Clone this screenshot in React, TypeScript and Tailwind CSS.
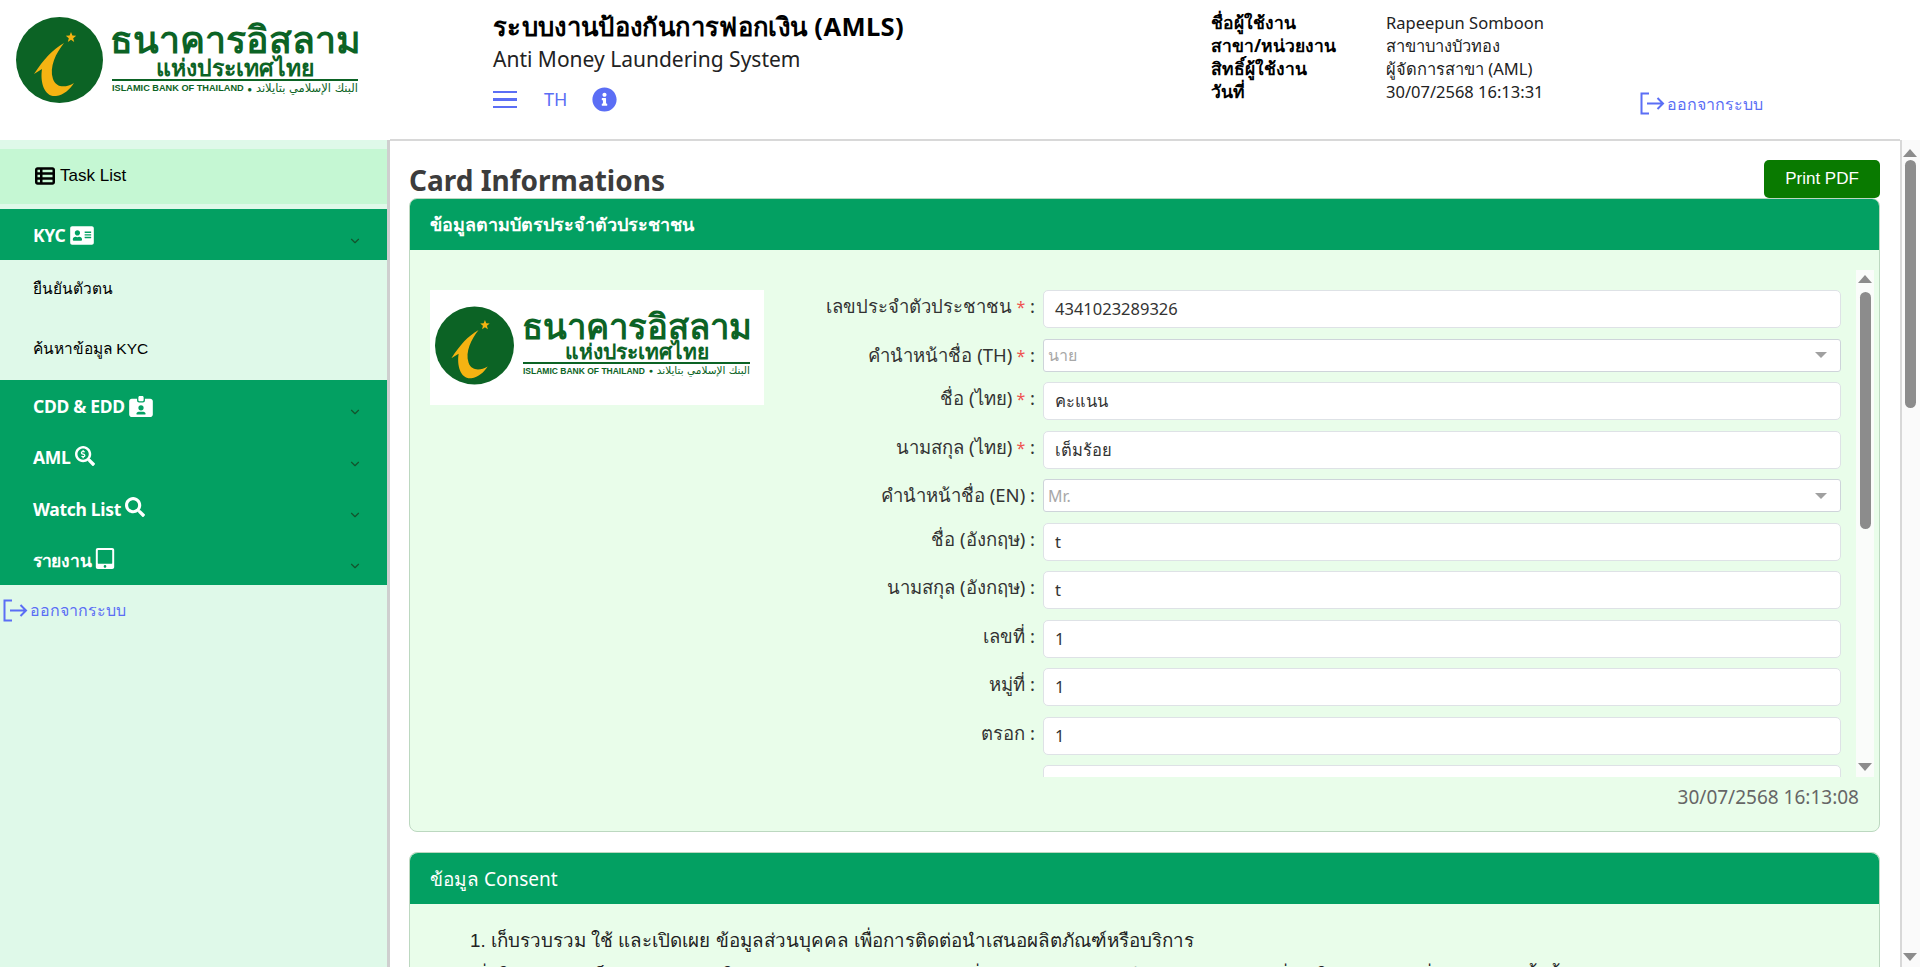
import { ChevronDown } from "lucide-react";
import { FaAddressCard, FaInfoCircle, FaSearch, FaSearchDollar, FaTabletAlt } from "react-icons/fa";
import { FaIdCardClip, FaTableList } from "react-icons/fa6";

function LogoMark({ className }: { className: string }) {
  return (
    <svg viewBox="0 0 87 86" className={className}>
      <ellipse cx="43.5" cy="43" rx="43.5" ry="43" fill="#0c6325" />
      <path
        d="M48 26C36 33 28 42 18 57L26 52C24 65 28 80 40 79C48 78 54 72 58 66C50 71 40 71 37 62C33 50 40 36 48 26Z"
        fill="#f5b312"
      />
      <path d="M55 15L56.4 18.6L60.2 18.8L57.2 21.2L58.2 25L55 22.8L51.8 25L52.8 21.2L49.8 18.8L53.6 18.6Z" fill="#f5b312" />
    </svg>
  );
}

function HeaderLogo() {
  return (
    <div className="flex items-start gap-[9px] text-[#0c6325]">
      <LogoMark className="w-[87px] h-[86px] shrink-0" />
      <div className="w-[246px] flex flex-col items-center pt-[2px]">
        <span className="text-[37.5px] leading-[40px] font-bold whitespace-nowrap">ธนาคารอิสลาม</span>
        <span className="text-[23px] leading-[16px] font-bold whitespace-nowrap">แห่งประเทศไทย</span>
        <div className="w-full h-[1.5px] bg-[#0c6325] mt-[4px]" />
        <div className="w-full flex justify-between items-center h-[16px]">
          <span className="text-[9.2px] font-bold font-['Liberation_Sans',sans-serif] whitespace-nowrap">ISLAMIC BANK OF THAILAND</span>
          <span className="text-[8px]">●</span>
          <span className="text-[11.5px] font-['DejaVu_Sans',sans-serif] whitespace-nowrap">البنك الإسلامي بتايلاند</span>
        </div>
      </div>
    </div>
  );
}

function CardLogo() {
  return (
    <div className="w-[334px] h-[115px] bg-white flex items-start gap-[9px] pl-[5px] pt-[16px] text-[#0c6325]">
      <LogoMark className="w-[79px] h-[79px] shrink-0" />
      <div className="w-[227px] flex flex-col items-center pt-[2px]">
        <span className="text-[34.7px] leading-[36px] font-bold whitespace-nowrap">ธนาคารอิสลาม</span>
        <span className="text-[21px] leading-[15px] font-bold whitespace-nowrap">แห่งประเทศไทย</span>
        <div className="w-full h-[1.5px] bg-[#0c6325] mt-[3px]" />
        <div className="w-full flex justify-between items-center h-[15px]">
          <span className="text-[8.5px] font-bold font-['Liberation_Sans',sans-serif] whitespace-nowrap">ISLAMIC BANK OF THAILAND</span>
          <span className="text-[7px]">●</span>
          <span className="text-[10.5px] font-['DejaVu_Sans',sans-serif] whitespace-nowrap">البنك الإسلامي بتايلاند</span>
        </div>
      </div>
    </div>
  );
}

function LogoutLink({ className }: { className?: string }) {
  return (
    <a className={`flex items-center gap-[2px] text-[#5b6ef5] text-[16px] leading-[22px] ${className ?? ""}`}>
      <svg viewBox="0 0 25 23" className="w-[25px] h-[23px]" fill="none" stroke="currentColor" strokeWidth="2">
        <path d="M9 1.5H1.5V21.5H9" />
        <path d="M7 11.5H23M17.5 6L23 11.5L17.5 17" />
      </svg>
      <span>ออกจากระบบ</span>
    </a>
  );
}

function MenuBand({ label, icon }: { label: string; icon: React.ReactNode }) {
  return (
    <div className="h-[51.25px] flex justify-between pl-[33px] pr-[25px] text-white">
      <div className="flex items-center gap-[4px] h-[52px] font-bold text-[17.5px] tracking-[-0.3px]">
        <span>{label}</span>
        {icon}
      </div>
      <ChevronDown className="w-[14px] h-[14px] mt-[25px] text-[#14532d]" strokeWidth={2} />
    </div>
  );
}

function Sidebar() {
  return (
    <aside className="w-[390px] shrink-0 h-full bg-[#dff9e9] border-r-[3px] border-[#cfcfcf] pt-[9px] font-['Liberation_Sans',sans-serif]">
      <div className="h-[55px] bg-[#c5f7d3] flex items-center pl-[35px] pb-[1px] gap-[5px] text-[17px] text-black">
        <FaTableList className="w-[20px] h-[20px]" />
        <span>Task List</span>
      </div>
      <div className="mt-[5px] bg-[#03a062] font-['Noto_Sans',sans-serif]">
        <MenuBand label="KYC" icon={<FaAddressCard className="w-[24px] h-[21px]" />} />
      </div>
      <div className="h-[120px] flex flex-col text-[15.5px] text-black pl-[33px]">
        <div className="h-[56px] flex items-center pt-[1px]">ยืนยันตัวตน</div>
        <div className="h-[64px] flex items-center">ค้นหาข้อมูล KYC</div>
      </div>
      <div className="bg-[#03a062] font-['Noto_Sans',sans-serif]">
        <MenuBand label="CDD & EDD" icon={<FaIdCardClip className="w-[24px] h-[21px]" />} />
        <MenuBand label="AML" icon={<FaSearchDollar className="w-[20px] h-[20px] -mt-[3px]" />} />
        <MenuBand label="Watch List" icon={<FaSearch className="w-[20px] h-[20px] -mt-[3px]" />} />
        <MenuBand label="รายงาน" icon={<FaTabletAlt className="w-[20px] h-[21px] -mt-[3px]" />} />
      </div>
      <LogoutLink className="mt-[14px] pl-[3px]" />
    </aside>
  );
}

type Row = { label: string; required?: boolean; value: string; select?: boolean };

const rows: Row[] = [
  { label: "เลขประจำตัวประชาชน", required: true, value: "4341023289326" },
  { label: "คำนำหน้าชื่อ (TH)", required: true, value: "นาย", select: true },
  { label: "ชื่อ (ไทย)", required: true, value: "คะแนน" },
  { label: "นามสกุล (ไทย)", required: true, value: "เต็มร้อย" },
  { label: "คำนำหน้าชื่อ (EN)", value: "Mr.", select: true },
  { label: "ชื่อ (อังกฤษ)", value: "t" },
  { label: "นามสกุล (อังกฤษ)", value: "t" },
  { label: "เลขที่", value: "1" },
  { label: "หมู่ที่", value: "1" },
  { label: "ตรอก", value: "1" },
];

function FormRow({ row }: { row: Row }) {
  return (
    <div className="flex gap-[8px]">
      <label className="w-[405px] h-[33px] shrink-0 text-right text-[18.5px] leading-[31px] text-[#333] whitespace-nowrap">
        {row.label}
        {row.required && <span className="text-[#ef5350] text-[16px]"> *</span>} :
      </label>
      {row.select ? (
        <div className="flex-1 h-[33px] bg-white border border-[#ced4da] rounded-[3px] flex items-center justify-between pl-[4px] pr-[13px] text-[16px] text-[#a8a8a8]">
          <span>{row.value}</span>
          <div className="w-0 h-0 border-x-[6px] border-x-transparent border-t-[6px] border-t-[#a0a0a0]" />
        </div>
      ) : (
        <div className="flex-1 h-[38px] bg-white border border-[#dee2e6] rounded-[5px] flex items-center pl-[11px] pt-[1px] text-[16.5px] text-[#333]">
          {row.value}
        </div>
      )}
    </div>
  );
}

function FakeScrollbar({ className, thumb }: { className: string; thumb: string }) {
  return (
    <div className={`flex flex-col items-center ${className}`}>
      <div className="w-0 h-0 mt-[5px] border-x-[7px] border-x-transparent border-b-[8px] border-b-[#8c8c8c]" />
      <div className={`w-[11px] rounded-full bg-[#8c8c8c] ${thumb}`} />
      <div className="flex-1" />
      <div className="w-0 h-0 mb-[6px] border-x-[7px] border-x-transparent border-t-[8px] border-t-[#8c8c8c]" />
    </div>
  );
}

function CardInfo() {
  return (
    <section className="h-[634px] rounded-[8px] border border-[#bcd8c0] bg-[#e9fdea] overflow-hidden shrink-0">
      <div className="h-[51px] bg-[#03a062] flex items-center pl-[20px] text-white text-[18px] font-semibold">
        ข้อมูลตามบัตรประจำตัวประชาชน
      </div>
      <div className="flex h-[507px] mt-[20px] pl-[20px]">
        <div className="flex-1 flex overflow-hidden">
          <div className="pt-[20px] shrink-0">
            <CardLogo />
          </div>
          <div className="flex-1 -ml-[134px] pt-[20px] flex flex-col gap-[10.5px]">
            {rows.map((row) => (
              <FormRow key={row.label} row={row} />
            ))}
            <div className="flex gap-[8px]">
              <div className="w-[405px] shrink-0" />
              <div className="flex-1 h-[38px] bg-white border border-[#dee2e6] rounded-[5px]" />
            </div>
          </div>
        </div>
        <FakeScrollbar className="w-[18px] ml-[15px] mr-[5px] bg-[#fafcfa]" thumb="mt-[9px] h-[237px]" />
      </div>
      <div className="text-right pr-[20px] mt-[5px] text-[19px] leading-[30px] text-[#666]">30/07/2568 16:13:08</div>
    </section>
  );
}

function ConsentCard() {
  return (
    <section className="mt-[20px] rounded-[8px] border border-[#bcd8c0] bg-[#e9fdea] shrink-0">
      <div className="h-[51px] bg-[#03a062] rounded-t-[8px] flex items-center pl-[20px] pt-[1px] text-white text-[19px]">
        ข้อมูล Consent
      </div>
      <div className="pl-[60px] pr-[60px] pt-[19px] text-[18.8px] leading-[36px] text-[#222] font-['Liberation_Sans',sans-serif]">
        <p className="whitespace-nowrap">1. เก็บรวบรวม ใช้ และเปิดเผย ข้อมูลส่วนบุคคล เพื่อการติดต่อนำเสนอผลิตภัณฑ์หรือบริการ</p>
        <p className="whitespace-nowrap">
          เพื่อให้ธนาคารเก็บรวบรวม และใช้ข้อมูลส่วนบุคคลของลูกค้า เพื่อนำเสนอผลิตภัณฑ์หรือบริการ สินค้าอื่นๆ ในกลุ่มบริษัทที่ธนาคารจัดตั้งขึ้นรวมถึงประกาศ ข่าวสาร ข้อเสนอพิเศษ และสิทธิประโยชน์ต่างๆ
        </p>
      </div>
    </section>
  );
}

export default function App() {
  return (
    <div className="h-screen w-full overflow-hidden flex flex-col bg-white font-['Noto_Sans',sans-serif]">
      <header className="h-[140px] shrink-0 flex">
        <div className="w-[493px] shrink-0 pl-[16px] pt-[17px]">
          <HeaderLogo />
        </div>
        <div className="w-[718px] shrink-0 pt-[10px]">
          <h1 className="text-[25.6px] leading-[34px] tracking-[0.35px] font-bold text-black">ระบบงานป้องกันการฟอกเงิน (AMLS)</h1>
          <p className="text-[21px] leading-[30px] text-[#222]">Anti Money Laundering System</p>
          <div className="flex items-center mt-[12px] text-[#5b6ef5]">
            <div className="w-[24px] flex flex-col gap-[5px]">
              <div className="h-[2.5px] bg-[#5b6ef5]" />
              <div className="h-[2.5px] bg-[#5b6ef5]" />
              <div className="h-[2.5px] bg-[#5b6ef5]" />
            </div>
            <span className="ml-[27px] text-[18px]">TH</span>
            <FaInfoCircle className="ml-[25px] w-[25px] h-[25px]" />
          </div>
        </div>
        <div className="w-[429px] shrink-0 pt-[11px] grid grid-cols-[175px_1fr] auto-rows-[23px] text-[16.5px] leading-[23px] text-[#222] content-start">
          <span className="font-bold text-[17.5px] text-black">ชื่อผู้ใช้งาน</span>
          <span>Rapeepun Somboon</span>
          <span className="font-bold text-[17.5px] text-black">สาขา/หน่วยงาน</span>
          <span>สาขาบางบัวทอง</span>
          <span className="font-bold text-[17.5px] text-black">สิทธิ์ผู้ใช้งาน</span>
          <span>ผู้จัดการสาขา (AML)</span>
          <span className="font-bold text-[17.5px] text-black">วันที่</span>
          <span>30/07/2568 16:13:31</span>
        </div>
        <LogoutLink className="self-end mb-[25px]" />
      </header>
      <div className="flex-1 min-h-0 flex">
        <Sidebar />
        <main className="flex-1 min-w-0 border-t-2 border-[#d8d8d8] -mt-[1px] pl-[19px] pr-[20px] flex flex-col overflow-hidden">
          <div className="h-[57px] shrink-0 flex items-end justify-between">
            <h2 className="text-[28px] leading-[36px] font-bold text-[#3c3c3c]">Card Informations</h2>
            <button className="w-[116px] h-[38px] rounded-[5px] bg-[#097a00] text-white text-[17px] font-['Liberation_Sans',sans-serif]">
              Print PDF
            </button>
          </div>
          <CardInfo />
          <ConsentCard />
        </main>
        <FakeScrollbar className="w-[20px] shrink-0 border-l-2 border-[#d8d8d8] bg-[#fafafa] pt-[4px] pr-[2px]" thumb="mt-[3px] h-[248px]" />
      </div>
    </div>
  );
}
